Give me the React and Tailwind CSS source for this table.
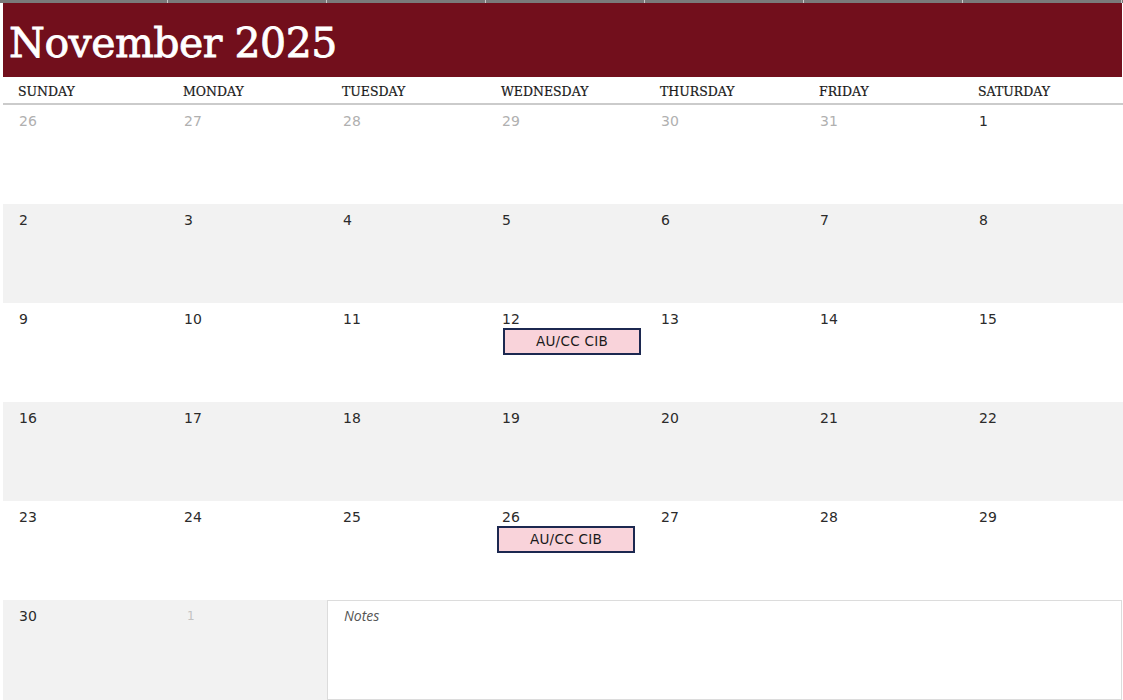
import React from 'react'

const days = ['SUNDAY', 'MONDAY', 'TUESDAY', 'WEDNESDAY', 'THURSDAY', 'FRIDAY', 'SATURDAY']

const weeks = [
  [['26', true], ['27', true], ['28', true], ['29', true], ['30', true], ['31', true], ['1']],
  [['2'], ['3'], ['4'], ['5'], ['6'], ['7'], ['8']],
  [['9'], ['10'], ['11'], ['12', false, 'a'], ['13'], ['14'], ['15']],
  [['16'], ['17'], ['18'], ['19'], ['20'], ['21'], ['22']],
  [['23'], ['24'], ['25'], ['26', false, 'b'], ['27'], ['28'], ['29']],
]

const cols = 'grid grid-cols-[165px_repeat(6,159px)]'

function Event({ shift }) {
  return (
    <div
      className={`h-[27px] w-[138px] border-2 border-[#1c2850] bg-[#f9d3da] flex items-center justify-center text-[13.5px] text-[#1a1a1a] tracking-[0.3px] ${shift ? '-ml-[5px]' : 'ml-px'}`}
    >
      AU/CC CIB
    </div>
  )
}

function Cell({ num, muted, ev }) {
  return (
    <div className="pl-4 pt-[8px]">
      <div className={`text-[14px] leading-[17px] ${muted ? 'text-[#b0b0b0]' : 'text-[#2b2b2b]'}`}>{num}</div>
      {ev === 'a' && <Event />}
      {ev === 'b' && <Event shift />}
    </div>
  )
}

export default function App() {
  return (
    <div className="w-[1123px] h-[700px] bg-white overflow-hidden font-['DejaVu_Sans',sans-serif]">
      {/* spreadsheet top edge */}
      <div className={`${cols} h-[3px] bg-[#7a7a7a] pl-[3px]`}>
        {days.map(d => (
          <div key={d} className="border-r border-[#c9c9c9]" />
        ))}
      </div>

      <div className="pl-[3px]">
        <div className="h-[74px] bg-[#720f1c] flex items-center pl-[6px] w-[1119px]">
          <h1 className="font-['DejaVu_Serif',serif] text-white text-[41px] tracking-[-0.5px] leading-none pt-[7px] [-webkit-text-stroke:0.8px_white]">
            November 2025
          </h1>
        </div>

        <div className={`${cols} h-[28px] items-center border-b-2 border-[#cbcbcb]`}>
          {days.map(d => (
            <div key={d} className="pl-[15px] font-['DejaVu_Serif',serif] text-[12.5px] text-[#1a1a1a] pt-[4px] [-webkit-text-stroke:0.2px_#1a1a1a]">
              {d}
            </div>
          ))}
        </div>

        {weeks.map((w, i) => (
          <div key={i} className={`${cols} h-[99px] ${i % 2 ? 'bg-[#f2f2f2]' : 'bg-white'}`}>
            {w.map(([n, muted, ev], j) => (
              <Cell key={j} num={n} muted={muted} ev={ev} />
            ))}
          </div>
        ))}

        <div className={`${cols} h-[100px]`}>
          <div className="bg-[#f2f2f2]">
            <Cell num="30" />
          </div>
          <div className="bg-[#f2f2f2] pl-4 pt-[8px]">
            <div className="text-[12px] leading-[17px] text-[#c2c2c2] pl-[3px]">1</div>
          </div>
          <div className="col-span-5 border border-[#dcdcdc] bg-white px-4 pt-[4px]">
            <div className="font-['Open_Sans',sans-serif] italic text-[14px] text-[#555]">Notes</div>
          </div>
        </div>
      </div>
    </div>
  )
}
